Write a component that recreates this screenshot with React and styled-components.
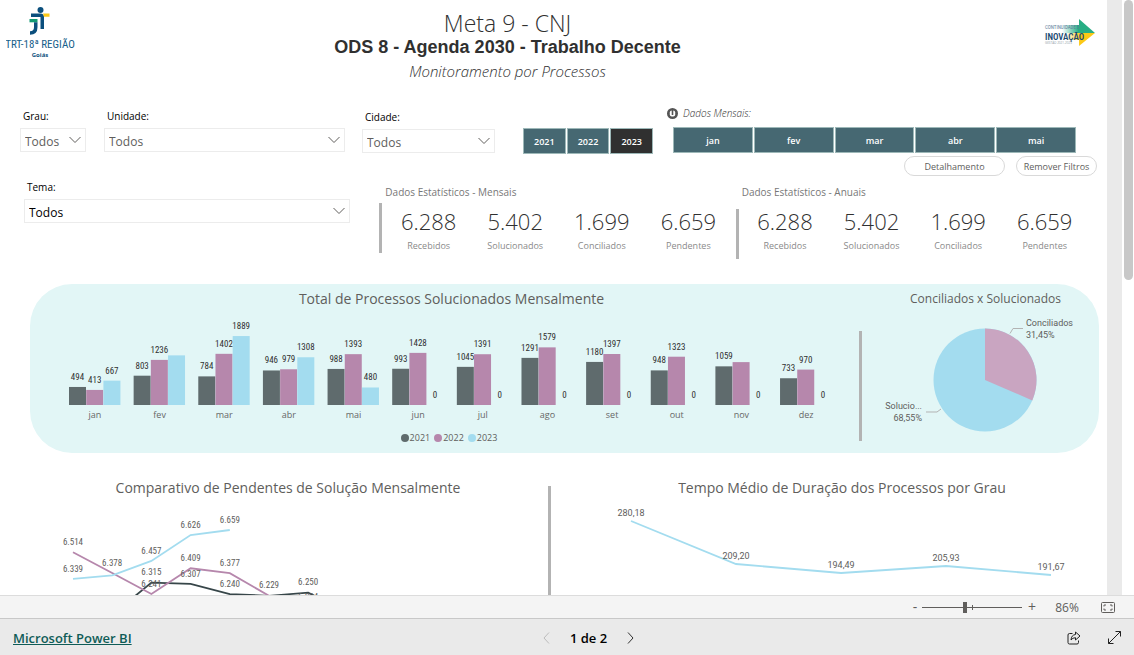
import React, { useState } from 'react';
import styled, { createGlobalStyle, ThemeProvider } from 'styled-components';

////////////////////////////////////////////////////////////////////////////////////////////////////////////////////////

const theme = {
  fonts: {
    ui: '"Open Sans", "Noto Sans", sans-serif',
    heading: '"Liberation Sans", Arial, sans-serif',
    narrow: '"Liberation Sans Narrow", "Roboto Condensed", "Liberation Sans", sans-serif',
    data: 'Roboto, sans-serif',
  },
  colors: {
    teal: '#466872',
    selected: '#303030',
    text: '#303030',
    muted: '#8a8a8a',
    title: '#605e5c',
    panel: '#e2f6f6',
    divider: '#b3b3b3',
  },
};

const series = {
  2021: '#5f6b6d',
  2022: '#b687ac',
  2023: '#a3dcef',
};

const GlobalStyle = createGlobalStyle`
  * {
    box-sizing: border-box;
  }
  body {
    margin: 0;
    font-family: ${p => p.theme.fonts.ui};
    color: ${p => p.theme.colors.text};
  }
  button,
  select {
    font-family: inherit;
    margin: 0;
  }
  h1,
  h2,
  h3,
  p,
  dl,
  dd {
    margin: 0;
    font-weight: 400;
  }
`;

////////////////////////////////////////////////////////////////////////////////////////////////////////////////////////

const Page = styled.div`
  display: flex;
  flex-direction: column;
  height: 100vh;
`;

const Report = styled.main`
  flex: 1;
  min-height: 0;
  display: flex;
  overflow: hidden;
`;

const Canvas = styled.div`
  flex: 1;
  min-width: 0;
`;

const Gutter = styled.div`
  width: 15px;
  background: #eaeaea;
`;

const Scrollbar = styled.div`
  width: 12px;
  padding: 0 1px 0 2px;
  &::before {
    content: '';
    display: block;
    height: 47%;
    border-radius: 5px;
    background: #c8c8c8;
  }
`;

const Divider = styled.div`
  width: 3px;
  height: ${p => p.$height};
  margin-top: ${p => p.$top};
  background: ${p => p.theme.colors.divider};
  flex: none;
`;

////////////////////////////////////////////////////////////////////////////////////////////////////////////////////////

const Header = styled.header`
  display: flex;
  height: 104px;
`;

const LogoCell = styled.div`
  width: ${p => p.$width};
  padding: ${p => p.$padding};
  display: flex;
  justify-content: ${p => p.$align};
  align-items: flex-start;
`;

const Titles = styled.div`
  flex: 1;
  padding-top: 11px;
  text-align: center;
  line-height: 24px;
`;

const MainTitle = styled.h1`
  font-size: 23px;
  font-weight: 300;
`;

const BoldTitle = styled.h2`
  font-family: ${p => p.theme.fonts.heading};
  font-size: 18px;
  font-weight: 700;
`;

const SubTitle = styled.p`
  font-size: 15px;
  font-weight: 300;
  font-style: italic;
`;

const LogoText = styled.text`
  font-family: ${p => p.theme.fonts[p.$font]};
  font-size: ${p => p.$size};
  font-weight: ${p => p.$weight || 400};
`;

const CourtLogo = () => (
  <svg width="74" height="56" viewBox="0 0 74 56" role="img" aria-label="TRT-18ª Região Goiás">
    <circle cx="34.500" cy="5" r="3" fill="#0b4f7d" />
    <path d="M25 8.500h9.500q3.500 0 3.500 3.500v12h-3.500v-12h-9.500z" fill="#0b4f7d" />
    <path d="M37 8.500h6.500v3.300h-5.500z" fill="#fcc917" />
    <path d="M23.500 14h8v3.300h-8z" fill="#139a74" />
    <path d="M28 17.300h3.500v5q0 7.500-7.500 7.500v-3.600q4 0 4-4z" fill="#0b4f7d" />
    <LogoText x="34" y="43" textAnchor="middle" fill="#17608a" $font="narrow" $size="11px">
      TRT-18ª REGIÃO
    </LogoText>
    <LogoText x="34" y="52" textAnchor="middle" fill="#0b4f7d" $font="ui" $size="6px" $weight={700}>
      Goiás
    </LogoText>
  </svg>
);

const InnovationLogo = () => (
  <svg width="52" height="30" viewBox="0 0 52 30" role="img" aria-label="Continuidade e Inovação">
    <defs>
      <linearGradient id="green">
        <stop offset="0" stopColor="#27ae84" stopOpacity="0" />
        <stop offset="0.500" stopColor="#27ae84" />
      </linearGradient>
      <linearGradient id="yellow">
        <stop offset="0" stopColor="#fcc917" stopOpacity="0" />
        <stop offset="0.500" stopColor="#fcc917" />
      </linearGradient>
    </defs>
    <path d="M18 7h17v-6l16 14h-33z" fill="url(#green)" />
    <path d="M22 15h29l-16 13v-6h-13z" fill="url(#yellow)" />
    <LogoText x="1" y="11" fill="#5b7d99" $font="narrow" $size="5px">
      CONTINUIDADE E
    </LogoText>
    <LogoText x="1" y="22" fill="#1b4a72" $font="narrow" $size="9px" $weight={600}>
      INOVAÇÃO
    </LogoText>
    <LogoText x="1" y="26" fill="#8d9aa6" $font="ui" $size="3px">
      GESTÃO 2021-2023
    </LogoText>
  </svg>
);

////////////////////////////////////////////////////////////////////////////////////////////////////////////////////////

const FilterRow = styled.section`
  display: flex;
  height: 76px;
  padding: 0 10px 0 20px;
`;

const FieldOuter = styled.div`
  flex: ${p => p.$flex};
  margin-right: ${p => p.$gap};
  padding-top: ${p => p.$top || '5px'};
  label {
    display: block;
    padding-left: 3px;
    height: 19px;
    font-size: 10px;
    line-height: 15px;
    color: #000;
  }
`;

const SelectBox = styled.div`
  display: grid;
  align-items: center;
  select {
    grid-area: 1 / 1;
    width: 100%;
    height: 24px;
    padding: 2px 4px 0;
    appearance: none;
    border: 1px solid #ececec;
    border-radius: 0;
    background: #fff;
    font-size: 12px;
    color: ${p => (p.$dark ? '#000' : '#605e5c')};
  }
  svg {
    grid-area: 1 / 1;
    justify-self: end;
    margin-right: 5px;
    pointer-events: none;
  }
`;

const Field = ({ id, label, dark, ...props }) => (
  <FieldOuter {...props}>
    <label htmlFor={id}>{label}</label>
    <SelectBox $dark={dark}>
      <select id={id}>
        <option>Todos</option>
      </select>
      <svg width="12" height="8" viewBox="0 0 12 8" fill="none" stroke="#605e5c">
        <path d="M0.500 1l5.500 5.500 5.500-5.500" />
      </svg>
    </SelectBox>
  </FieldOuter>
);

const Slicer = styled.div`
  display: flex;
  gap: 1px;
  height: 26px;
`;

const SlicerButton = styled.button`
  flex: 1;
  padding: 0;
  border: 1px solid #9db8b8;
  background: ${p => (p.$selected ? p.theme.colors.selected : p.theme.colors.teal)};
  color: #fff;
  font-size: 9px;
  font-weight: 600;
`;

const Years = styled.div`
  width: 130px;
  margin-right: 14px;
  padding-top: 24px;
`;

const Months = styled.div`
  flex: 430;
`;

const MonthsLabel = styled.div`
  display: flex;
  align-items: center;
  gap: 5px;
  height: 18px;
  margin-bottom: 5px;
  font-size: 10px;
  font-weight: 300;
  font-style: italic;
`;

const MonthSlicer = styled(Slicer)`
  margin: 0 21px 0 6px;
`;

const Actions = styled.div`
  display: flex;
  justify-content: flex-end;
  gap: 11px;
  padding-top: 3px;
`;

const Pill = styled.button`
  width: ${p => p.$width};
  height: 20px;
  padding: 0;
  border: 1px solid #d9d9d9;
  border-radius: 10px;
  background: #fff;
  color: #605e5c;
  font-size: 9px;
`;

////////////////////////////////////////////////////////////////////////////////////////////////////////////////////////

const StatsRow = styled.section`
  display: flex;
  height: 104px;
  padding: 0 15px 0 24px;
`;

const StatsOuter = styled.div`
  flex: 347;
  padding: 3px 0 0 3px;
  margin-right: 4px;
  h3 {
    height: 18px;
    font-size: 10px;
    line-height: 18px;
    color: #777;
  }
  dl {
    display: grid;
    grid-template-columns: repeat(4, 1fr);
  }
  dl div {
    display: flex;
    flex-direction: column-reverse;
    text-align: center;
  }
  dt {
    font-size: 9px;
    line-height: 14px;
    color: ${p => p.theme.colors.muted};
  }
  dd {
    padding: 6px 0 4px;
    font-size: 22px;
    line-height: 28px;
    font-weight: 300;
  }
`;

const stats = [
  ['Recebidos', '6.288'],
  ['Solucionados', '5.402'],
  ['Conciliados', '1.699'],
  ['Pendentes', '6.659'],
];

const Stats = ({ title }) => (
  <StatsOuter>
    <h3>{title}</h3>
    <dl>
      {stats.map(([label, value]) => (
        <div key={label}>
          <dt>{label}</dt>
          <dd>{value}</dd>
        </div>
      ))}
    </dl>
  </StatsOuter>
);

////////////////////////////////////////////////////////////////////////////////////////////////////////////////////////

const Panel = styled.section`
  display: flex;
  height: 169px;
  margin: 0 8px 0 30px;
  border-radius: 42px;
  background: ${p => p.theme.colors.panel};
`;

const ChartBlock = styled.div`
  flex: ${p => p.$flex};
  min-width: 0;
  display: flex;
  flex-direction: column;
  align-items: center;
`;

const ChartTitle = styled.h3`
  padding-top: 5px;
  padding-bottom: ${p => p.$bottom || 0};
  padding-left: ${p => p.$shift || 0};
  font-size: ${p => p.$size || '14px'};
  line-height: 20px;
  color: ${p => p.theme.colors.title};
`;

const Chart = styled.svg`
  display: block;
  width: 100%;
  height: ${p => p.$height};
  flex: none;
`;

const DataLabel = styled.text`
  font-family: ${p => p.theme.fonts[p.$font || 'narrow']};
  font-size: 9px;
  fill: ${p => p.$color || '#605e5c'};
  text-anchor: ${p => p.$anchor || 'middle'};
`;

const AxisLabel = styled.text`
  font-size: 9px;
  fill: #666;
  text-anchor: middle;
`;

const Legend = styled.ul`
  display: flex;
  gap: 4px;
  margin: 0;
  padding: 2px 0 0 9px;
  list-style: none;
  font-size: 9px;
  line-height: 14px;
  color: ${p => p.theme.colors.title};
  li {
    display: flex;
    align-items: center;
    gap: 1px;
  }
`;

const Dot = styled.span`
  width: 8px;
  height: 8px;
  border-radius: 50%;
  background: ${p => p.$color};
`;

const solved = [
  ['jan', 494, 413, 667],
  ['fev', 803, 1236, 1360],
  ['mar', 784, 1402, 1889],
  ['abr', 946, 979, 1308],
  ['mai', 988, 1393, 480],
  ['jun', 993, 1428, 0],
  ['jul', 1045, 1391, 0],
  ['ago', 1291, 1579, 0],
  ['set', 1180, 1397, 0],
  ['out', 948, 1323, 0],
  ['nov', 1059, 1175, 0],
  ['dez', 733, 970, 0],
];

// values whose label collides with a neighbour
const hiddenLabels = [1360, 1175];

const BarChart = () => {
  const base = 96;
  return (
    <Chart viewBox="0 0 829 120" $height="120px">
      {solved.map(([month, ...values], i) => {
        const left = 39 + i * 64.64;
        return (
          <g key={month}>
            {values.map((value, j) => {
              const height = value * 0.0365;
              const x = left + j * 17.2;
              return (
                <g key={j}>
                  <rect x={x} y={base - height} width="17" height={height} fill={Object.values(series)[j]} />
                  {!hiddenLabels.includes(value) && (
                    <DataLabel x={x + 8.5} y={base - height - 7} $color="#303030">
                      {value}
                    </DataLabel>
                  )}
                </g>
              );
            })}
            <AxisLabel x={left + 26} y={base + 13}>
              {month}
            </AxisLabel>
          </g>
        );
      })}
    </Chart>
  );
};

const PieChart = () => (
  <Chart viewBox="0 0 237 140" $height="140px">
    <circle cx="123" cy="71" r="51.500" fill={series[2023]} />
    <path d="M123 71V19.500A51.500 51.500 0 0 1 170.300 91.400Z" fill="#c9a5c1" />
    <path d="M148 24.500l3-5h10M64 103h11l4-3" fill="none" stroke="#b3b3b3" />
    <DataLabel x="164" y="17" $font="data" $anchor="start">
      Conciliados
    </DataLabel>
    <DataLabel x="164" y="29" $font="data" $anchor="start">
      31,45%
    </DataLabel>
    <DataLabel x="60" y="100" $font="data" $anchor="end">
      Solucio...
    </DataLabel>
    <DataLabel x="60" y="112" $font="data" $anchor="end">
      68,55%
    </DataLabel>
  </Chart>
);

////////////////////////////////////////////////////////////////////////////////////////////////////////////////////////

const TrendRow = styled.section`
  display: flex;
  padding-top: 20px;
`;

const pending = [
  { color: '#374649', values: [5950, 6105, 6315, 6307, 6240, 6229, 6250, 6120] },
  { color: series[2022], values: [6514, 6378, 6241, 6409, 6377, 6229, 6180] },
  { color: series[2023], values: [6339, 6362, 6457, 6626, 6659] },
];

const pendingLabels = [
  [0, 6514, 43],
  [0, 6339, 70],
  [1, 6378, 64],
  [2, 6457, 52],
  [2, 6315, 73],
  [2, 6241, 85],
  [3, 6626, 26],
  [3, 6409, 59],
  [3, 6307, 75],
  [4, 6659, 21],
  [4, 6377, 64],
  [4, 6240, 85],
  [5, 6229, 86],
  [6, 6250, 83],
  [6, 6204, 98],
];

const pendingX = i => 73 + i * 39.2;
const pendingY = value => 28 + (6659 - value) * 0.153;

const PendingChart = () => (
  <Chart viewBox="0 0 548 150" $height="150px">
    {pending.map(({ color, values }) => (
      <polyline
        key={color}
        points={values.map((v, i) => `${pendingX(i)},${pendingY(v)}`).join(' ')}
        fill="none"
        stroke={color}
        strokeWidth="1.800"
      />
    ))}
    {pendingLabels.map(([i, value, y]) => (
      <DataLabel key={`${i}-${value}`} x={pendingX(i)} y={y}>
        {(value / 1000).toFixed(3)}
      </DataLabel>
    ))}
  </Chart>
);

const durations = [
  ['280,18', 19],
  ['209,20', 62],
  ['194,49', 71],
  ['205,93', 64],
  ['191,67', 73],
];

const DurationChart = () => (
  <Chart viewBox="0 0 556 150" $height="150px">
    <polyline
      points={durations.map(([, y], i) => `${80 + i * 105},${y}`).join(' ')}
      fill="none"
      stroke={series[2023]}
      strokeWidth="1.800"
    />
    {durations.map(([label, y], i) => (
      <DataLabel key={label} x={80 + i * 105} y={y - 5} $font="data">
        {label}
      </DataLabel>
    ))}
  </Chart>
);

////////////////////////////////////////////////////////////////////////////////////////////////////////////////////////

const ZoomBar = styled.div`
  display: flex;
  justify-content: flex-end;
  align-items: center;
  height: 23px;
  padding-right: 16px;
  border-top: 1px solid #dcdcdc;
  background: #f4f4f4;
  color: ${p => p.theme.colors.title};
`;

const IconButton = styled.button`
  display: flex;
  justify-content: center;
  align-items: center;
  width: ${p => p.$width || '16px'};
  height: 20px;
  padding: 0;
  border: 0;
  background: none;
  color: ${p => p.$color || 'inherit'};
  font-size: 14px;
  line-height: 20px;
`;

const ZoomSlider = styled.input`
  appearance: none;
  width: 100px;
  height: 12px;
  margin: 0 2px 0 0;
  /* the tick marks 100% */
  background: linear-gradient(#605e5c, #605e5c) 50px 50% / 1px 5px no-repeat,
    linear-gradient(#605e5c, #605e5c) 0 50% / 100% 1px no-repeat;
  &::-webkit-slider-thumb {
    appearance: none;
    width: 4px;
    height: 11px;
    background: #605e5c;
  }
`;

const ZoomValue = styled.output`
  width: 58px;
  padding-right: 4px;
  font-size: 12px;
  text-align: center;
`;

const Footer = styled.footer`
  display: grid;
  grid-template-columns: 538fr auto 495fr;
  align-items: center;
  height: 37px;
  padding-top: 1px;
  border-top: 1px solid #c8c8c8;
  background: #eaeaea;
  color: #000;
`;

const BrandLink = styled.a`
  justify-self: start;
  margin-left: 13px;
  color: #0f5c57;
  font-size: 13px;
  font-weight: 600;
`;

const Pager = styled.nav`
  display: flex;
  align-items: center;
  gap: 15px;
  font-size: 13px;
  font-weight: 600;
`;

const FooterActions = styled.div`
  display: flex;
  justify-content: flex-end;
  gap: 24px;
  padding-right: 12px;
`;

////////////////////////////////////////////////////////////////////////////////////////////////////////////////////////

const App = () => {
  const [year, setYear] = useState('2023');
  const [zoom, setZoom] = useState(43);
  return (
    <ThemeProvider theme={theme}>
      <GlobalStyle />
      <Page>
        <Report>
          <Canvas>
            <Header>
              <LogoCell $width="80px" $padding="5px 0 0 6px" $align="flex-start">
                <CourtLogo />
              </LogoCell>
              <Titles>
                <MainTitle>Meta 9 - CNJ</MainTitle>
                <BoldTitle>ODS 8 - Agenda 2030 - Trabalho Decente</BoldTitle>
                <SubTitle>Monitoramento por Processos</SubTitle>
              </Titles>
              <LogoCell $width="172px" $padding="18px 11px 0 0" $align="flex-end">
                <InnovationLogo />
              </LogoCell>
            </Header>

            <FilterRow>
              <Field id="grau" label="Grau:" $flex="0 0 66px" $gap="18px" />
              <Field id="unidade" label="Unidade:" $flex="241" $gap="17px" />
              <Field id="cidade" label="Cidade:" $flex="0 0 133px" $gap="28px" $top="6px" />
              <Years>
                <Slicer>
                  {['2021', '2022', '2023'].map(y => (
                    <SlicerButton key={y} $selected={y === year} onClick={() => setYear(y)}>
                      {y}
                    </SlicerButton>
                  ))}
                </Slicer>
              </Years>
              <Months>
                <MonthsLabel>
                  <svg width="11" height="11" viewBox="0 0 11 11">
                    <circle cx="5.500" cy="5.500" r="5.500" fill="#555" />
                    <rect x="2.800" y="2.500" width="5.400" height="6" rx="2" fill="#fff" />
                    <path d="M5.500 2v5" stroke="#555" strokeWidth="1.600" />
                  </svg>
                  Dados Mensais:
                </MonthsLabel>
                <MonthSlicer>
                  {['jan', 'fev', 'mar', 'abr', 'mai'].map(m => (
                    <SlicerButton key={m}>{m}</SlicerButton>
                  ))}
                </MonthSlicer>
                <Actions>
                  <Pill $width="101px">Detalhamento</Pill>
                  <Pill $width="81px">Remover Filtros</Pill>
                </Actions>
              </Months>
            </FilterRow>

            <StatsRow>
              <Field id="tema" label="Tema:" dark $flex="327" $gap="29px" $top="0px" />
              <Divider $height="50px" $top="23px" />
              <Stats title="Dados Estatísticos - Mensais" />
              <Divider $height="50px" $top="29px" />
              <Stats title="Dados Estatísticos - Anuais" />
            </StatsRow>

            <Panel>
              <ChartBlock $flex="829">
                <ChartTitle $shift="14px">Total de Processos Solucionados Mensalmente</ChartTitle>
                <BarChart />
                <Legend>
                  {Object.entries(series).map(([label, color]) => (
                    <li key={label}>
                      <Dot $color={color} />
                      {label}
                    </li>
                  ))}
                </Legend>
              </ChartBlock>
              <Divider $height="110px" $top="47px" />
              <ChartBlock $flex="237">
                <ChartTitle $size="12px" $shift="10px">
                  Conciliados x Solucionados
                </ChartTitle>
                <PieChart />
              </ChartBlock>
            </Panel>

            <TrendRow>
              <ChartBlock $flex="548">
                <ChartTitle $shift="28px" $bottom="4px">
                  Comparativo de Pendentes de Solução Mensalmente
                </ChartTitle>
                <PendingChart />
              </ChartBlock>
              <Divider $height="160px" $top="13px" />
              <ChartBlock $flex="556">
                <ChartTitle $shift="26px" $bottom="4px">
                  Tempo Médio de Duração dos Processos por Grau
                </ChartTitle>
                <DurationChart />
              </ChartBlock>
            </TrendRow>
          </Canvas>
          <Gutter />
          <Scrollbar />
        </Report>

        <ZoomBar>
          <IconButton aria-label="Reduzir" $width="14px">
            -
          </IconButton>
          <ZoomSlider
            type="range"
            aria-label="Zoom"
            min="0"
            max="100"
            value={zoom}
            onChange={e => setZoom(Number(e.target.value))}
          />
          <IconButton aria-label="Ampliar">+</IconButton>
          <ZoomValue>86%</ZoomValue>
          <IconButton aria-label="Ajustar à página" $width="20px">
            <svg width="14" height="11" viewBox="0 0 14 11" fill="none" stroke="#605e5c">
              <rect x="0.500" y="0.500" width="13" height="10" rx="1" />
              <path d="M3 4.500v-1.500h2M9 3h2v1.500M11 6.500v1.500h-2M5 8h-2v-1.500" />
            </svg>
          </IconButton>
        </ZoomBar>

        <Footer>
          <BrandLink href="https://powerbi.microsoft.com">Microsoft Power BI</BrandLink>
          <Pager>
            <IconButton aria-label="Página anterior" $color="#bdbdbd">
              <svg width="7" height="12" viewBox="0 0 7 12" fill="none" stroke="currentColor">
                <path d="M6 0.500L1 6l5 5.500" />
              </svg>
            </IconButton>
            1 de 2
            <IconButton aria-label="Próxima página" $color="#333">
              <svg width="7" height="12" viewBox="0 0 7 12" fill="none" stroke="currentColor">
                <path d="M1 0.500L6 6l-5 5.500" />
              </svg>
            </IconButton>
          </Pager>
          <FooterActions>
            <IconButton aria-label="Compartilhar" $color="#222">
              <svg width="14" height="14" viewBox="0 0 14 14" fill="none" stroke="currentColor" strokeLinejoin="round">
                <path d="M5.500 2.500h-3q-1.500 0-1.500 1.500v7.500q0 1.500 1.500 1.500h7.500q1.500 0 1.500-1.500v-2" />
                <path d="M8.500 1l4.500 4-4.500 4v-2.300q-3 0-4.500 2.300 0.300-5 4.500-5.500z" />
              </svg>
            </IconButton>
            <IconButton aria-label="Tela inteira" $color="#222">
              <svg width="13" height="13" viewBox="0 0 13 13" fill="none" stroke="currentColor">
                <path d="M0.500 12.500l12-12M7.500 0.500h5v5M0.500 7.500v5h5" />
              </svg>
            </IconButton>
          </FooterActions>
        </Footer>
      </Page>
    </ThemeProvider>
  );
};

export default App;
